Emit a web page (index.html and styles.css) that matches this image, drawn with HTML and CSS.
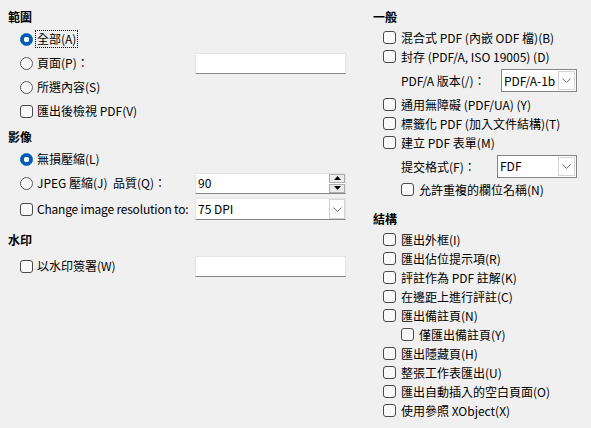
FILE: index.html
```html
<!DOCTYPE html>
<html lang="zh-Hant">
<head>
<meta charset="utf-8">
<link rel="stylesheet" href="styles.css">
</head>
<body>
<div class="page">
  <div class="col left">
    <div class="heading">範圍</div>
    <div class="row"><span class="radio on"></span><span class="lbl focus">全部(A)</span></div>
    <div class="row"><span class="radio"></span><span class="lbl wide">頁面(P)：</span><span class="field"></span></div>
    <div class="row"><span class="radio"></span><span class="lbl">所選內容(S)</span></div>
    <div class="row"><span class="check"></span><span class="lbl">匯出後檢視 PDF(V)</span></div>

    <div class="heading h2">影像</div>
    <div class="row"><span class="radio on"></span><span class="lbl">無損壓縮(L)</span></div>
    <div class="row"><span class="radio"></span><span class="lbl wide">JPEG 壓縮(J)&nbsp;&nbsp;品質(Q)：</span>
      <span class="field"><span class="val">90</span>
        <span class="spin">
          <span class="sbtn"><svg width="7" height="4" viewBox="0 0 7 4"><path d="M0 4 L3.5 0 L7 4 Z" fill="#000"/></svg></span>
          <span class="sbtn"><svg width="7" height="4" viewBox="0 0 7 4"><path d="M0 0 L3.5 4 L7 0 Z" fill="#000"/></svg></span>
        </span>
      </span>
    </div>
    <div class="row r3"><span class="check"></span><span class="lbl wide tight">Change image resolution to:</span>
      <span class="field combo1"><span class="val">75 DPI</span>
        <span class="ddbtn"><svg width="9" height="5" viewBox="0 0 9 5"><path d="M0.5 0.5 L4.5 4.5 L8.5 0.5" fill="none" stroke="#707070" stroke-width="1"/></svg></span>
      </span>
    </div>

    <div class="heading h3">水印</div>
    <div class="row r4"><span class="check"></span><span class="lbl wide">以水印簽署(W)</span><span class="field"></span></div>
  </div>

  <div class="col right">
    <div class="heading">一般</div>
    <div class="rrow first"><span class="check"></span><span class="lbl">混合式 PDF (內嵌 ODF 檔)(B)</span></div>
    <div class="rrow"><span class="check"></span><span class="lbl">封存 (PDF/A, ISO 19005) (D)</span></div>
    <div class="rrow sub crow1"><span class="sublbl w100">PDF/A 版本(/)：</span>
      <span class="combo c1"><span class="val">PDF/A-1b</span>
        <span class="cbtn"><svg width="9" height="5" viewBox="0 0 9 5"><path d="M0.5 0.5 L4.5 4.5 L8.5 0.5" fill="none" stroke="#707070" stroke-width="1"/></svg></span>
      </span>
    </div>
    <div class="rrow"><span class="check"></span><span class="lbl">通用無障礙 (PDF/UA) (Y)</span></div>
    <div class="rrow"><span class="check"></span><span class="lbl">標籤化 PDF (加入文件結構)(T)</span></div>
    <div class="rrow"><span class="check"></span><span class="lbl">建立 PDF 表單(M)</span></div>
    <div class="rrow sub crow2"><span class="sublbl w96">提交格式(F)：</span>
      <span class="combo c2"><span class="val">FDF</span>
        <span class="cbtn"><svg width="9" height="5" viewBox="0 0 9 5"><path d="M0.5 0.5 L4.5 4.5 L8.5 0.5" fill="none" stroke="#707070" stroke-width="1"/></svg></span>
      </span>
    </div>
    <div class="rrow sub"><span class="check"></span><span class="lbl">允許重複的欄位名稱(N)</span></div>

    <div class="heading rh2">結構</div>
    <div class="rrow first"><span class="check"></span><span class="lbl">匯出外框(I)</span></div>
    <div class="rrow"><span class="check"></span><span class="lbl">匯出佔位提示項(R)</span></div>
    <div class="rrow"><span class="check"></span><span class="lbl">評註作為 PDF 註解(K)</span></div>
    <div class="rrow"><span class="check"></span><span class="lbl">在邊距上進行評註(C)</span></div>
    <div class="rrow"><span class="check"></span><span class="lbl">匯出備註頁(N)</span></div>
    <div class="rrow sub"><span class="check"></span><span class="lbl">僅匯出備註頁(Y)</span></div>
    <div class="rrow"><span class="check"></span><span class="lbl">匯出隱藏頁(H)</span></div>
    <div class="rrow"><span class="check"></span><span class="lbl">整張工作表匯出(U)</span></div>
    <div class="rrow"><span class="check"></span><span class="lbl">匯出自動插入的空白頁面(O)</span></div>
    <div class="rrow"><span class="check"></span><span class="lbl">使用參照 XObject(X)</span></div>
  </div>
</div>
</body>
</html>
```

FILE: styles.css
```css
html, body {
  margin: 0;
  padding: 0;
  background: #f0f0f0;
}
body {
  width: 591px;
  height: 428px;
  overflow: hidden;
  font-family: "Noto Sans CJK TC", "Noto Sans", sans-serif;
  font-size: 12px;
  color: #000;
}
.page {
  display: flex;
  padding-top: 8px;
}
.col {
  display: flex;
  flex-direction: column;
  box-sizing: border-box;
}
.left {
  width: 365px;
  padding-left: 8px;
}
.right {
  flex: 1;
  padding-left: 8px;
}
.heading {
  height: 18px;
  line-height: 18px;
  font-weight: bold;
}
.h2 { margin-top: 5px; }
.h3 { margin-top: 10px; }
.rh2 { margin-top: 11px; }

.row {
  display: flex;
  align-items: center;
  height: 24px;
  padding-left: 12px;
}
.left .heading + .row { margin-top: 1px; }
.left .r3 { margin-top: 2px; }
.left .heading + .r4 { margin-top: 5px; }

.rrow {
  display: flex;
  align-items: center;
  height: 19px;
  padding-left: 10px;
}
.rrow.first { margin-top: 2px; }
.rrow.sub { padding-left: 28px; }
.crow1 { height: 29px; }
.crow2 { height: 28px; }

.lbl {
  line-height: 16px;
  white-space: nowrap;
}
.wide {
  width: 158px;
  flex: none;
}
.tight {
  letter-spacing: -0.2px;
}
.focus {
  outline: 1px dotted #000;
  padding: 0 1px;
  margin-left: -1px;
}
.sublbl {
  white-space: nowrap;
  flex: none;
}
.w100 { width: 100px; }
.w96 { width: 96px; }

.radio {
  width: 13px;
  height: 13px;
  box-sizing: border-box;
  border: 1px solid #5c5c5c;
  border-radius: 50%;
  background: #f7f7f7;
  margin-right: 4px;
  flex: none;
}
.radio.on {
  border-color: #005fb8;
  background: radial-gradient(circle, #fff 0 2.4px, #005fb8 3px);
}
.check {
  width: 13px;
  height: 13px;
  box-sizing: border-box;
  border: 1px solid #4a4a4a;
  border-radius: 3px;
  background: #f9f9f9;
  margin-right: 5px;
  flex: none;
}
.left .check { margin-right: 4px; }

.field {
  width: 151px;
  height: 21px;
  box-sizing: border-box;
  background: #fff;
  border: 1px solid #e4e4e4;
  border-bottom-color: #868686;
  display: flex;
  align-items: center;
  flex: none;
}
.val {
  padding-left: 2px;
  flex: 1;
  line-height: 16px;
}
.spin {
  display: flex;
  flex-direction: column;
  gap: 1px;
  align-self: center;
}
.sbtn {
  width: 16px;
  height: 9px;
  box-sizing: border-box;
  border: 1px solid #adadad;
  background: #ececec;
  display: flex;
  align-items: center;
  justify-content: center;
}
.combo1 {
  height: 22px;
}
.ddbtn {
  width: 16px;
  height: 20px;
  box-sizing: border-box;
  border: 1px solid #d4d4d4;
  background: #fff;
  display: flex;
  align-items: center;
  justify-content: center;
}
.combo {
  height: 23px;
  box-sizing: border-box;
  border: 1px solid #858585;
  background: #fff;
  display: flex;
  align-items: center;
  flex: none;
  padding-right: 1px;
}
.c1 { width: 76px; }
.c2 { width: 80px; }
.cbtn {
  width: 17px;
  height: 19px;
  box-sizing: border-box;
  border: 1px solid #d4d4d4;
  background: #fff;
  display: flex;
  align-items: center;
  justify-content: center;
}
```
